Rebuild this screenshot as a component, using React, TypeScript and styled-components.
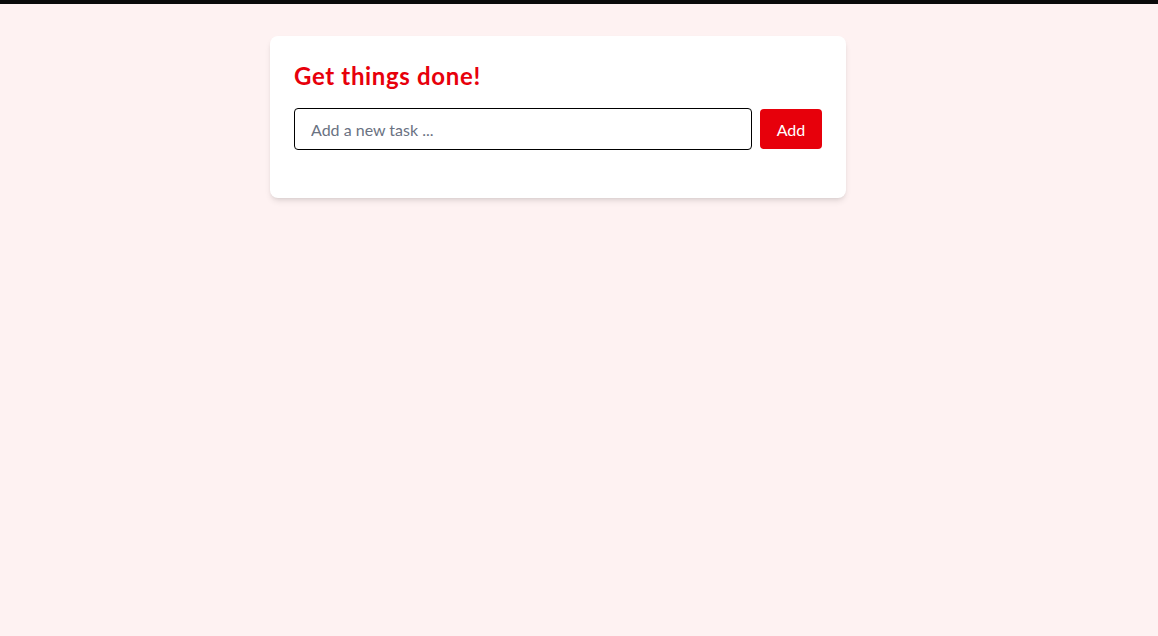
import React, { useState } from "react";
import styled, { createGlobalStyle } from "styled-components";

const Global = createGlobalStyle`
  html, body { margin: 0; padding: 0; }
  body {
    background: #fef2f2;
    border-top: 4px solid #0a0a0a;
    font-family: Lato, "Noto Sans", sans-serif;
    min-height: 632px;
  }
  * { box-sizing: border-box; }
`;

const Page = styled.main`
  display: flex;
  justify-content: center;
  padding: 32px 42px 0 0;
`;

const Card = styled.section`
  width: 576px;
  background: #ffffff;
  border-radius: 8px;
  box-shadow: 0 4px 6px -1px rgba(0,0,0,0.1), 0 2px 4px -2px rgba(0,0,0,0.1);
  padding: 24px 24px 48px;
`;

const Title = styled.h2`
  margin: 0 0 16px;
  font-size: 24px;
  line-height: 32px;
  font-weight: 700;
  letter-spacing: 0.65px;
  color: #e7000b;
`;

const Form = styled.form`
  display: flex;
  align-items: center;
  gap: 8px;
`;

const Input = styled.input`
  flex: 1;
  height: 42px;
  border: 1px solid #000;
  border-radius: 4px;
  padding: 0 16px;
  font-family: inherit;
  font-size: 16px;
  color: #111;
  outline: none;
  &::placeholder { color: #6a7282; }
`;

const Button = styled.button`
  height: 40px;
  min-width: 62px;
  padding: 0 16px;
  border: none;
  border-radius: 4px;
  background: #e7000b;
  color: #fff;
  font-family: inherit;
  font-size: 16px;
  cursor: pointer;
`;

export default function App() {
  const [value, setValue] = useState("");
  return (
    <>
      <Global />
      <Page>
        <Card>
          <Title>Get things done!</Title>
          <Form onSubmit={(e) => { e.preventDefault(); setValue(""); }}>
            <Input
              placeholder="Add a new task ..."
              value={value}
              onChange={(e) => setValue(e.target.value)}
            />
            <Button type="submit">Add</Button>
          </Form>
        </Card>
      </Page>
    </>
  );
}
